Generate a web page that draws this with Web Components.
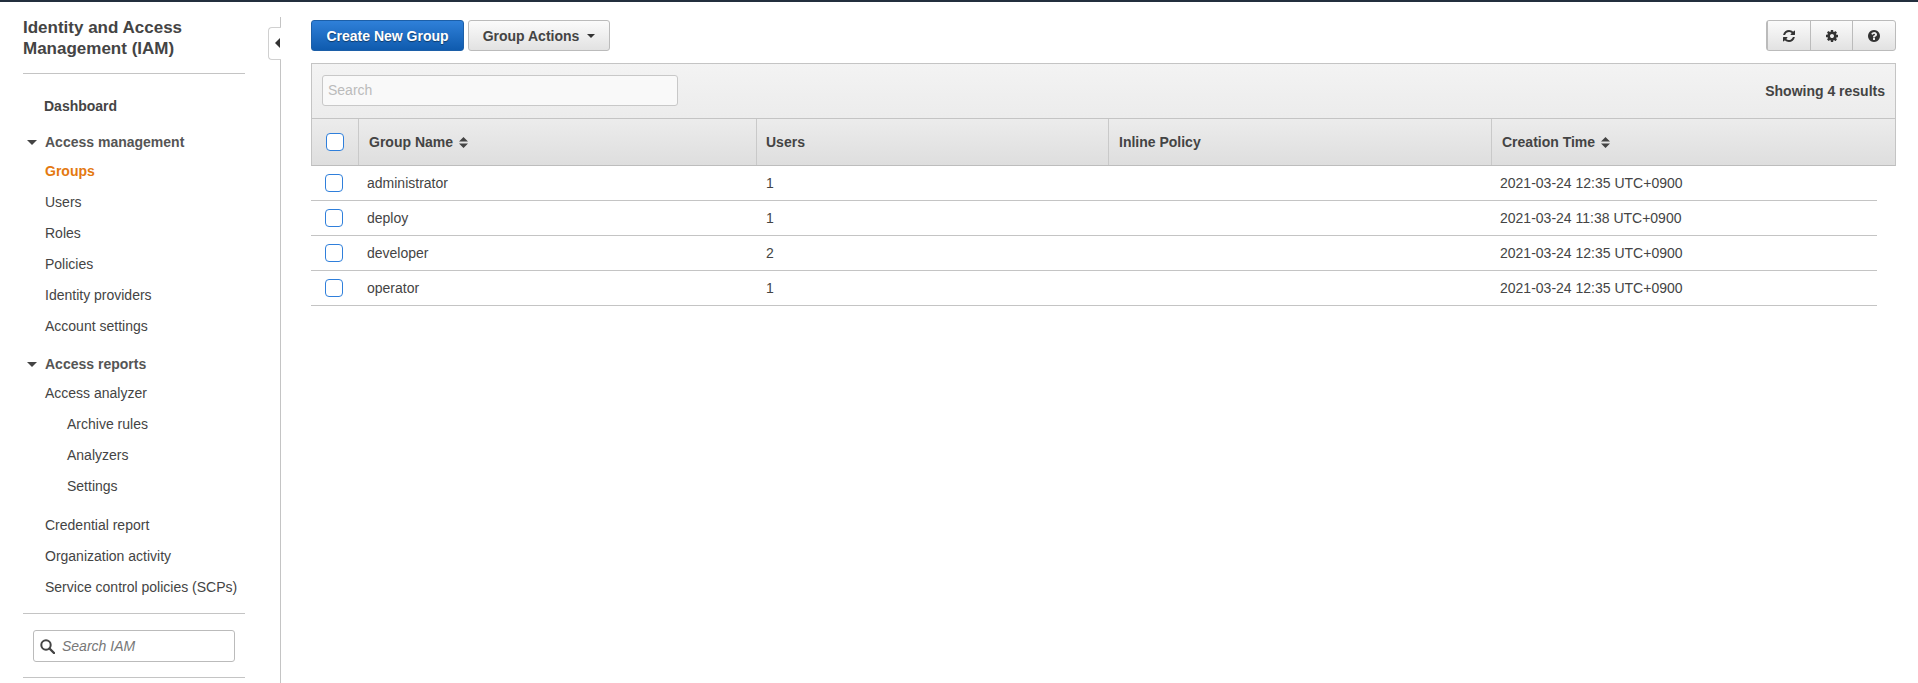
<!DOCTYPE html>
<html>
  <head>
    <title>IAM Management Console - Groups</title>
    <meta charset="utf-8">
    <style>
      html, body {
        margin: 0;
        height: 683px;
        overflow: hidden;
        background: #fff;
        font-family: "Liberation Sans", Arial, sans-serif;
        font-size: 14px;
        color: #444;
      }
      iam-page { height: 683px; }
    </style>
  </head>

  <body>
    <iam-page>
      <iam-sidebar slot="side">
        <span slot="title">Identity and Access Management (IAM)</span>
        <nav-item kind="top">Dashboard</nav-item>
        <nav-item kind="section" style="margin-top:8px">Access management</nav-item>
        <nav-item kind="active">Groups</nav-item>
        <nav-item>Users</nav-item>
        <nav-item>Roles</nav-item>
        <nav-item>Policies</nav-item>
        <nav-item>Identity providers</nav-item>
        <nav-item>Account settings</nav-item>
        <nav-item kind="section" style="margin-top:10px">Access reports</nav-item>
        <nav-item>Access analyzer</nav-item>
        <nav-item kind="sub">Archive rules</nav-item>
        <nav-item kind="sub">Analyzers</nav-item>
        <nav-item kind="sub">Settings</nav-item>
        <nav-item style="margin-top:8px">Credential report</nav-item>
        <nav-item>Organization activity</nav-item>
        <nav-item>Service control policies (SCPs)</nav-item>
      </iam-sidebar>

      <iam-button slot="actions" primary>Create New Group</iam-button>
      <iam-button slot="actions" caret style="margin-left:4px">Group Actions</iam-button>
      <icon-buttons slot="tools"></icon-buttons>

      <groups-table slot="table" results="Showing 4 results">
        <group-row name="administrator" users="1" created="2021-03-24 12:35 UTC+0900"></group-row>
        <group-row name="deploy" users="1" created="2021-03-24 11:38 UTC+0900"></group-row>
        <group-row name="developer" users="2" created="2021-03-24 12:35 UTC+0900"></group-row>
        <group-row name="operator" users="1" created="2021-03-24 12:35 UTC+0900"></group-row>
      </groups-table>
    </iam-page>

    <template id="page-tpl">
      <style>
        :host { display: block; }
        .top { height: 2px; background: #232f3e; }
        .wrap { display: flex; align-items: stretch; height: 681px; }
        main { flex: 1; padding: 18px 22px 0 30px; min-width: 0; }
        .bar { display: flex; height: 31px; margin-bottom: 12px; }
        .tools { margin-left: auto; }
      </style>
      <div class="top"></div>
      <div class="wrap">
        <slot name="side"></slot>
        <main>
          <div class="bar">
            <slot name="actions"></slot>
            <div class="tools"><slot name="tools"></slot></div>
          </div>
          <slot name="table"></slot>
        </main>
      </div>
    </template>

    <template id="sidebar-tpl">
      <style>
        :host {
          display: block;
          box-sizing: content-box;
          width: 222px;
          padding: 15px 36px 0 23px;
          position: relative;
          flex: none;
        }
        /* vertical rule starts a bit under the top bar */
        .rule { position: absolute; right: 0; top: 15px; bottom: 0; width: 1px; background: #c4c4c4; }
        .tab {
          position: absolute; right: 0; top: 25px;
          width: 13px; height: 33px; box-sizing: border-box;
          background: #fff;
          border: 1px solid #d0d0d0; border-right: 0;
          border-radius: 4px 0 0 4px;
        }
        .tab::after {
          content: ""; position: absolute; right: 1px; top: 10px;
          border: 5px solid transparent; border-left: 0; border-right: 5px solid #333;
        }
        h1 {
          margin: 0; font-size: 17px; line-height: 21px; font-weight: bold; color: #444;
        }
        hr { border: 0; height: 1px; background: #c4c4c4; margin: 0; }
        .nav { margin-top: 16px; }
        .search {
          display: flex; align-items: center; gap: 7px;
          box-sizing: border-box;
          width: 202px; height: 32px; margin: 16px 0 15px 10px; padding-left: 6px;
          border: 1px solid #bbb; border-radius: 3px;
          font-style: italic; color: #777;
        }
        svg { display: block; }
      </style>
      <div class="rule"></div>
      <div class="tab"></div>
      <h1><slot name="title"></slot></h1>
      <hr style="margin-top:14px">
      <div class="nav"><slot></slot></div>
      <hr style="margin-top:11px">
      <div class="search">
        <svg width="15" height="15" viewBox="0 0 15 15"><circle cx="6" cy="6" r="4.7" fill="none" stroke="#444" stroke-width="2"/><path d="M9.5 9.5L14 14" stroke="#444" stroke-width="2.4" stroke-linecap="round"/></svg>
        <span>Search IAM</span>
      </div>
      <hr>
    </template>

    <template id="nav-tpl">
      <style>
        :host {
          display: flex; align-items: center;
          height: 31px; padding-left: 22px;
          color: #444; white-space: nowrap;
          position: relative;
        }
        :host([kind="top"]) { font-weight: bold; padding-left: 21px; }
        :host([kind="active"]) { font-weight: bold; color: #e47911; }
        :host([kind="sub"]) { padding-left: 44px; }
        :host([kind="section"]) { font-weight: bold; color: #555; height: 26px; }
        .caret { display: none; position: absolute; left: 4px; top: 11px;
          border: 5px solid transparent; border-bottom: 0; border-top: 5px solid #444; }
        :host([kind="section"]) .caret { display: block; }
      </style>
      <span class="caret"></span><slot></slot>
    </template>

    <template id="button-tpl">
      <style>
        :host {
          display: inline-flex; align-items: center; justify-content: center;
          box-sizing: border-box; height: 31px;
          padding: 0 14px;
          border: 1px solid #bbb; border-radius: 3px;
          background: linear-gradient(#fbfbfb, #e2e2e2);
          font-weight: bold; color: #444;
          white-space: nowrap;
        }
        :host([primary]) {
          width: 153px; padding: 0;
          border-color: #1c5fa8;
          background: linear-gradient(#2f80d9, #0f5bae);
          color: #fff;
          text-shadow: 0 1px 1px rgba(0,0,0,.45);
        }
        .caret { display: none; margin-left: 8px;
          border: 4px solid transparent; border-bottom: 0; border-top: 4px solid #333; }
        :host([caret]) { width: 142px; padding: 0; }
        :host([caret]) .caret { display: block; }
      </style>
      <slot></slot><span class="caret"></span>
    </template>

    <template id="icons-tpl">
      <style>
        :host {
          display: flex; box-sizing: border-box;
          width: 130px; height: 31px;
          border: 1px solid #bbb; border-radius: 3px;
          background: linear-gradient(#fbfbfb, #e2e2e2);
        }
        div { flex: 1; display: flex; align-items: center; justify-content: center; border-left: 1px solid #bbb; }
        div:first-child { border-left: 0; }
        svg { fill: #333; display: block; }
      </style>
      <div><svg width="12" height="12" viewBox="128 128 1536 1536"><path d="M1639 1056q0 5-1 7-64 268-268 434.5t-478 166.5q-146 0-282.5-55t-243.5-157l-129 129q-19 19-45 19t-45-19-19-45v-448q0-26 19-45t45-19h448q26 0 45 19t19 45-19 45l-137 137q71 66 161 102t187 36q134 0 250-65t186-179q11-17 53-117 8-23 30-23h192q13 0 22.500 9.500t9.500 22.500zm25-800v448q0 26-19 45t-45 19h-448q-26 0-45-19t-19-45 19-45l138-138q-148-137-349-137-134 0-250 65t-186 179q-11 17-53 117-8 23-30 23h-199q-13 0-22.500-9.500t-9.500-22.500v-7q65-268 270-434.500t480-166.500q146 0 284 55.500t245 156.500l130-129q19-19 45-19t45 19 19 45z"/></svg></div>
      <div><svg width="12" height="12" viewBox="128 128 1536 1536"><path d="M1152 896q0-106-75-181t-181-75-181 75-75 181 75 181 181 75 181-75 75-181zm512-109v222q0 12-8 23t-20 13l-185 28q-19 54-39 91 35 50 107 138 10 12 10 25t-9 23q-27 37-99 108t-94 71q-12 0-26-9l-138-108q-44 23-91 38-16 136-29 186-7 28-36 28h-222q-14 0-24.500-8.500t-11.500-21.500l-28-184q-49-16-90-37l-141 107q-10 9-25 9-14 0-25-11-126-114-165-168-7-10-7-23 0-12 8-23 15-21 51-66.500t54-70.500q-27-50-41-99l-183-27q-13-2-21-12.500t-8-23.500v-222q0-12 8-23t19-13l186-28q14-46 39-92-40-57-107-138-10-12-10-24 0-10 9-23 26-36 98.500-107.500t94.500-71.500q13 0 26 10l138 107q44-23 91-38 16-136 29-186 7-28 36-28h222q14 0 24.500 8.500t11.500 21.500l28 184q49 16 90 37l142-107q9-9 24-9 13 0 25 10 129 119 165 170 7 8 7 22 0 12-8 23-15 21-51 66.500t-54 70.500q26 50 41 98l183 28q13 2 21 12.500t8 23.500z"/></svg></div>
      <div><svg width="12" height="12" viewBox="128 128 1536 1536"><path d="M1024 1376v-192q0-14-9-23t-23-9h-192q-14 0-23 9t-9 23v192q0 14 9 23t23 9h192q14 0 23-9t9-23zm256-672q0-88-55.500-163t-138.500-116-170-41q-243 0-371 213-15 24 8 42l132 100q7 6 19 6 16 0 25-12 53-68 86-92 34-24 86-24 48 0 85.500 26t37.500 59q0 38-20 61t-68 45q-63 28-115.500 86.500t-52.500 125.500v36q0 14 9 23t23 9h192q14 0 23-9t9-23q0-19 21.500-49.500t54.500-49.500q32-18 49-28.500t46-35 44.500-48 28-60.500 12.500-81zm384 192q0 209-103 385.500t-279.500 279.500-385.500 103-385.500-103-279.500-279.500-103-385.500 103-385.500 279.500-279.500 385.500-103 385.500 103 279.500 279.500 103 385.500z"/></svg></div>
    </template>

    <template id="table-tpl">
      <style>
        :host { display: block; }
        .head { border: 1px solid #c4c4c4; border-bottom-color: #bdbdbd; }
        .toolbar {
          display: flex; align-items: center; justify-content: space-between;
          height: 55px; box-sizing: border-box; padding: 0 10px 1px;
          background: linear-gradient(#f3f3f3, #ececec);
          border-bottom: 1px solid #c4c4c4;
          font-weight: bold; color: #444;
        }
        input {
          box-sizing: border-box; width: 356px; height: 31px; padding: 0 5px 2px;
          border: 1px solid #c8c8c8; border-radius: 3px;
          background: #f9f9f9; font: 14px "Liberation Sans", Arial, sans-serif;
        }
        input::placeholder { color: #bbb; opacity: 1; }
        .cols {
          display: grid; grid-template-columns: 47px 398px 352px 383px 1fr;
          height: 46px;
          background: linear-gradient(#ececec, #dedede);
          font-weight: bold; color: #444;
        }
        .cols > div {
          display: flex; align-items: center; gap: 6px; padding-left: 10px;
          border-right: 1px solid #c9c9c9;
        }
        .cols > div:first-child { padding-left: 14px; }
        .cols > div:last-child { border-right: 0; }
        .cols > .users { padding-left: 9px; }
        .sort { display: block; fill: #444; }
      </style>
      <div class="head">
        <div class="toolbar">
          <input placeholder="Search">
          <span id="results"></span>
        </div>
        <div class="cols">
          <div><iam-check></iam-check></div>
          <div>Group Name <svg class="sort" width="9" height="11" viewBox="0 0 9 11"><path d="M4.500 0l4.500 4.500H0zM4.500 11L0 6.500h9z"/></svg></div>
          <div class="users">Users</div>
          <div>Inline Policy</div>
          <div>Creation Time <svg class="sort" width="9" height="11" viewBox="0 0 9 11"><path d="M4.500 0l4.500 4.500H0zM4.500 11L0 6.500h9z"/></svg></div>
        </div>
      </div>
      <slot></slot>
    </template>

    <template id="row-tpl">
      <style>
        :host {
          display: grid; grid-template-columns: 56px 399px 343px 391px 1fr;
          align-items: center;
          box-sizing: border-box;
          width: 1566px; height: 35px;
          border-bottom: 1px solid #c4c4c4;
          color: #444;
        }
        .c { padding-left: 14px; }
      </style>
      <div class="c"><iam-check></iam-check></div>
      <div id="name"></div>
      <div id="users"></div>
      <div></div>
      <div id="created"></div>
    </template>

    <template id="check-tpl">
      <style>
        :host {
          display: block; box-sizing: border-box;
          width: 18px; height: 18px;
          border: 1px solid #2f7fdb; border-radius: 4px;
          background: #fff;
        }
      </style>
    </template>

    <script>
      // every element just clones its template into an open shadow root
      function stamp(el, id) {
        let root = el.attachShadow({ mode: 'open' });
        root.appendChild(document.getElementById(id).content.cloneNode(true));
        return root;
      }

      class IamPage extends HTMLElement {
        constructor() { super(); stamp(this, 'page-tpl'); }
      }
      class IamSidebar extends HTMLElement {
        constructor() { super(); stamp(this, 'sidebar-tpl'); }
      }
      class NavItem extends HTMLElement {
        constructor() { super(); stamp(this, 'nav-tpl'); }
      }
      class IamButton extends HTMLElement {
        constructor() { super(); stamp(this, 'button-tpl'); }
      }
      class IconButtons extends HTMLElement {
        constructor() { super(); stamp(this, 'icons-tpl'); }
      }
      class IamCheck extends HTMLElement {
        constructor() { super(); stamp(this, 'check-tpl'); }
      }

      class GroupsTable extends HTMLElement {
        constructor() { super(); stamp(this, 'table-tpl'); }
        connectedCallback() {
          this.shadowRoot.getElementById('results').textContent = this.getAttribute('results');
        }
      }

      class GroupRow extends HTMLElement {
        constructor() { super(); stamp(this, 'row-tpl'); }
        connectedCallback() {
          for (let key of ['name', 'users', 'created']) {
            this.shadowRoot.getElementById(key).textContent = this.getAttribute(key);
          }
        }
      }

      customElements.define('iam-check', IamCheck);
      customElements.define('iam-page', IamPage);
      customElements.define('iam-sidebar', IamSidebar);
      customElements.define('nav-item', NavItem);
      customElements.define('iam-button', IamButton);
      customElements.define('icon-buttons', IconButtons);
      customElements.define('groups-table', GroupsTable);
      customElements.define('group-row', GroupRow);
    </script>
  </body>
</html>
